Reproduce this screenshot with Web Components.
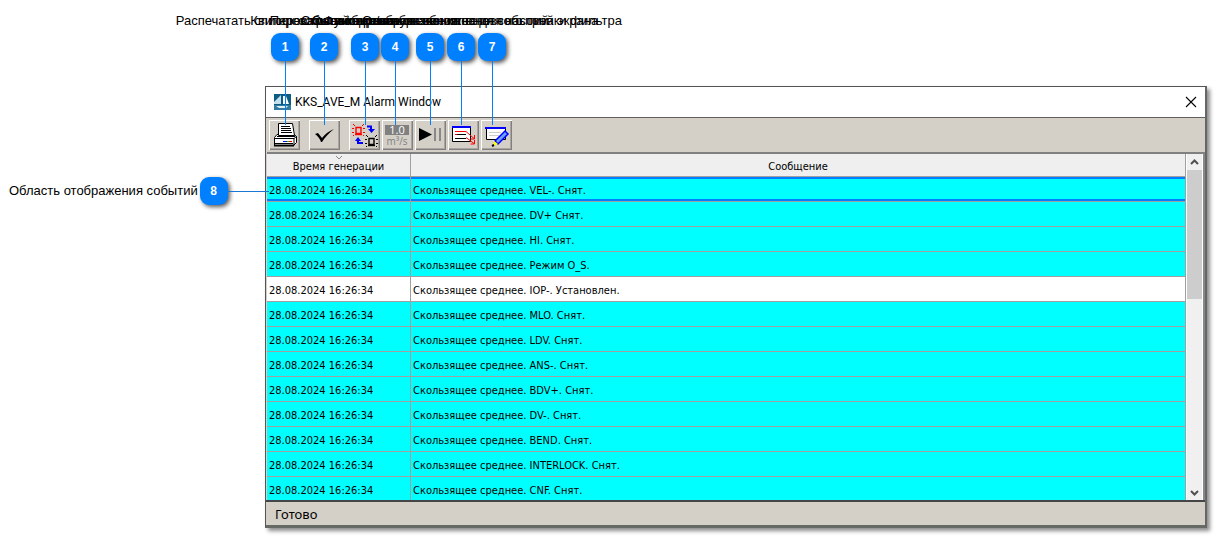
<!DOCTYPE html>
<html lang="ru">
<head>
<meta charset="utf-8">
<title>KKS_AVE_M Alarm Window</title>
<style>
body { margin: 0; background: #fff; color: #000; font: 13px/16px "Liberation Sans", Arial, sans-serif; }
</style>
</head>
<body>
<help-page>
  <call-out slot="marks" n="1" style="--at:285px">Распечатать список событий экрана</call-out>
  <call-out slot="marks" n="2" style="--at:324px">Квитировать сообщения</call-out>
  <call-out slot="marks" n="3" style="--at:365px">Переключение режимов звонка</call-out>
  <call-out slot="marks" n="4" style="--at:395px">Скрыть/показать значения тега</call-out>
  <call-out slot="marks" n="5" style="--at:430px">Остановка/запуск обновления событий</call-out>
  <call-out slot="marks" n="6" style="--at:461px">Функция отображения основного окна экрана</call-out>
  <call-out slot="marks" n="7" style="--at:492px">Отображение окна для настройки фильтра</call-out>
  <side-note slot="side" n="8">Область отображения событий</side-note>
  <alarm-window>
    <span slot="title">KKS_AVE_M Alarm Window</span>
    <tool-bar slot="tools"></tool-bar>
    <event-table></event-table>
    <scroll-bar slot="scroll"></scroll-bar>
    <span slot="status">Готово</span>
  </alarm-window>
</help-page>
<script>
const define = (name, html, setup) => customElements.define(name, class extends HTMLElement {
  connectedCallback() {
    if (this.shadowRoot) return;
    const root = this.attachShadow({ mode: "open" });
    root.innerHTML = html;
    if (setup) setup(root, this);
  }
});

define("help-page", `<style>
  :host { display: grid; position: relative; grid-template: 86px calc(100vh - 95px) / 265px minmax(0, 1fr); padding: 0 9px 9px 0; overflow: hidden; }
  .marks { grid-column: 1 / 3; }
</style><div class="marks"><slot name="marks"></slot></div><slot name="side"></slot><slot></slot>`);

define("number-badge", `<style>
  :host { display: grid; place-items: center; box-sizing: border-box; width: 28px; height: 28px; flex: none; border-radius: 9px; background: #0080ff; color: #fff; font-weight: bold; font-size: 12px; line-height: 16px; box-shadow: 2px 2px 4px rgba(0,0,0,.65); }
</style><slot></slot>`);

define("call-out", `<style>
  :host { position: absolute; z-index: 2; top: 13px; left: var(--at); width: 0; display: flex; flex-direction: column; align-items: center; gap: 4px; white-space: nowrap; pointer-events: none; }
  .stem { width: 1px; height: 64px; margin-top: -4px; background: #0080ff; }
</style><div><slot></slot></div><number-badge></number-badge><div class="stem"></div>`,
(root, host) => root.querySelector("number-badge").textContent = host.getAttribute("n"));

define("side-note", `<style>
  :host { display: flex; align-items: center; align-self: start; gap: 2px; margin: 91px -4px 0 9px; position: relative; z-index: 2; white-space: nowrap; }
  .stem { flex: 1; height: 1px; margin-left: -2px; background: #1976d2; }
</style><span><slot></slot></span><number-badge></number-badge><div class="stem"></div>`,
(root, host) => root.querySelector("number-badge").textContent = host.getAttribute("n"));

define("alarm-window", `<style>
  :host { display: flex; flex-direction: column; box-sizing: border-box; min-width: 0; border: 1px solid #555; border-right: 2px solid #666; border-bottom: 3px solid #656a65; background: #d4d0c8; box-shadow: 3px 3px 4px rgba(0,0,0,.45); }
  header { display: flex; align-items: center; gap: 4px; height: 30px; padding: 0 6px 0 8px; background: #fff; border-bottom: 1px solid #606060; font: 12px/16px Roboto, "Open Sans", sans-serif; }
  header .t { flex: 1; }
  header button { width: 16px; height: 16px; padding: 0; border: 0; background: none; }
  svg { display: block; }
  .main { flex: 1; min-height: 0; display: flex; margin-left: 1px; overflow: hidden; border-top: 2px solid #808080; background: #efefef; border-right: 2px solid #888; }
  .main .view { flex: 1; min-width: 0; overflow: hidden; }
  footer { flex: none; height: 23px; border-top: 2px solid #454545; padding-left: 9px; font: 13px/24px "Noto Sans", sans-serif; }
</style>
<header>
  <svg width="17" height="16" viewBox="0 0 17 16"><rect width="17" height="16" fill="#0b5c82"/><path d="M7 1v9H0v-2z" fill="#c6dfec"/><path d="M9 2h3l3 8H9z" fill="#fff"/><path d="M0 11h17v5H0z" fill="#347c9f"/><path d="M2 12h12l-2 2H5z" fill="#e2eff5"/></svg>
  <span class="t"><slot name="title"></slot></span>
  <button aria-label="Закрыть"><svg width="16" height="16"><path d="M3 3l10 10M13 3L3 13" stroke="#000" stroke-width="1.1"/></svg></button>
</header>
<slot name="tools"></slot>
<div class="main"><div class="view"><slot></slot></div><slot name="scroll"></slot></div>
<footer><slot name="status"></slot></footer>`);

define("tool-button", `<style>
  :host { display: block; }
  button { display: block; width: 31px; height: 30px; padding: 0; border: 0; background: #d4d0c8; box-shadow: inset 1px 1px #fff, inset -1px -1px #808080, inset -2px -2px #aaa69f; }
</style><button><slot></slot></button>`,
(root, host) => root.querySelector("button").setAttribute("aria-label", host.getAttribute("label")));

const icon = body => `<svg width="31" height="30" viewBox="0 0 31 30" fill="none">${body}</svg>`;
const lamp = `<path d="M4 3.500h5v6H4z" stroke-width="1.400"/><path d="M3 10.500h7" stroke-width="1.400"/><path d="M1 0l2 2M12 0l-2 2M0 4.500h2M11 4.500h2M0 8.500h2M11 8.500h2M2 11l-1 1M11 11l1 1" stroke-width="1"/>`;
define("tool-bar", `<style>
  :host { display: flex; flex: none; align-items: center; gap: 2px; height: 34px; padding-left: 3px; }
  .solo { margin-right: 7px; }
  svg { display: block; }
</style>
<tool-button class="solo" label="Печать">${icon(`<path d="M8 14.500L5.500 17.500V25.500H24.500L27.500 22.500V16.500L25 14.500z" fill="#fff" stroke="#000"/><path d="M9.500 3.500h14l2 12h-16z" fill="#fff" stroke="#000"/><path d="M12 6.500h9M12 8.500h10M12 10.500h10M12 12.500h11" stroke="#000"/><path d="M8 16.500h18M5 18.500h20M25 18.500v7M25 18.500l2.500-2M6 23.500h18" stroke="#000"/><path d="M5 25.500h20" stroke="#000" stroke-width="2"/><path d="M14 21.500h4" stroke="#00f"/><path d="M18 21.500h2" stroke="#0c0"/><path d="M20 21.500h3" stroke="#e00"/>`)}</tool-button>
<tool-button class="solo" label="Квитировать">${icon(`<path d="M6 14l3-1 4 5c3-4 7-7 12-9-5 4-9 8-12 13h-1c-1-3-3-6-6-8z" fill="#000"/>`)}</tool-button>
<tool-button label="Режим">${icon(`<g transform="translate(3 4)" stroke="#f00">${lamp}</g><g transform="translate(16 15)" stroke="#000">${lamp}</g><path d="M18 6.500h4v3" stroke="#00f" stroke-width="2"/><path d="M19 9h7l-3.500 4z" fill="#00f"/><path d="M14 23H9v-3" stroke="#00f" stroke-width="2"/><path d="M6 21l3-4 3 4z" fill="#00f"/>`)}</tool-button>
<tool-button label="Значения">${icon(`<path d="M3 5h24v10H3z" fill="#808080"/><text x="15" y="14" text-anchor="middle" font-family="Open Sans" font-size="11" fill="#fff">1.0</text><text x="15" y="25" text-anchor="middle" font-family="Open Sans" font-size="10" fill="#808080">m³/s</text>`)}</tool-button>
<tool-button label="Пуск и пауза">${icon(`<path d="M4 8l13 6.500L4 21z" fill="#000"/><path d="M20 8v13M25 8v13" stroke="#888" stroke-width="2"/>`)}</tool-button>
<tool-button label="Окно на экран">${icon(`<path d="M4.500 7.500h18v14h-18z" fill="#fff" stroke="#000"/><path d="M4 7h19" stroke="#00f" stroke-width="2"/><path d="M7 11.500h11M7 14.500h11M7 18.500h11" stroke="#000"/><path d="M7 11.500h11l8 7M7 14.500h2M18 17.500l8 6M26.500 15v4h-4M26.500 20v4h-4" stroke="#f00"/>`)}</tool-button>
<tool-button label="Фильтр">${icon(`<path d="M5.500 8.500h19v11h-19z" fill="#fff" stroke="#000"/><path d="M4 8h21" stroke="#00f" stroke-width="2"/><path d="M8 12.500h12M8 15.500h10" stroke="#ccc"/><path d="M24 11l3 3-10 10-3-3z" fill="#6aa0ff" stroke="#00f" stroke-width="1.500"/><path d="M13 21l4 3-5 2z" fill="#ff0"/><path d="M11 26l2-1" stroke="#000" stroke-width="2"/>`)}</tool-button>`);

const messages = ["VEL-. Снят.", "DV+ Снят.", "HI. Снят.", "Режим O_S.", "IOP-. Установлен.", "MLO. Снят.", "LDV. Снят.", "ANS-. Снят.", "BDV+. Снят.", "DV-. Снят.", "BEND. Снят.", "INTERLOCK. Снят.", "CNF. Снят."];
define("event-table", `<style>
  :host { display: block; font: 11px/16px "DejaVu Sans Condensed", "Noto Sans", sans-serif; }
  table { width: 100%; table-layout: fixed; border-collapse: separate; border-spacing: 0; }
  th, td { box-sizing: border-box; padding: 3px 2px 0; border: solid #a0a0a0; border-width: 0 1px 1px 0; text-align: left; white-space: nowrap; }
  th { height: 23px; text-align: center; font-weight: normal; background: #efefef; position: relative; }
  th:first-child { width: 144px; }
  th svg { position: absolute; top: 1px; left: 50%; margin-left: -4px; }
  td { height: 25px; background: #0ff; }
  .set td { background: #fff; }
  .sel td { box-shadow: inset 0 2px #0080ff, inset 0 -2px #0080ff; }
</style><table><thead><tr><th scope="col"><svg width="8" height="5"><path d="M1 1l3 3 3-3" fill="none" stroke="#888"/></svg>Время генерации</th><th scope="col">Сообщение</th></tr></thead><tbody></tbody></table>`,
root => {
  root.querySelector("tbody").innerHTML = messages.map((m, i) =>
    `<tr class="${i === 0 ? "sel" : m.includes("Установлен") ? "set" : ""}"><td>28.08.2024 16:26:34</td><td>Скользящее среднее. ${m}</td></tr>`).join("");
});

define("scroll-bar", `<style>
  :host { display: flex; flex: none; flex-direction: column; width: 15px; background: #f0f0f0; border: solid #fff; border-width: 0 1px; }
  button { flex: none; height: 16px; padding: 0; border: 0; background: #f0f0f0; }
  .track { flex: 1; }
  .thumb { height: 41%; background: #cdcdcd; }
  svg { display: block; margin: auto; }
  path { fill: none; stroke: #505050; stroke-width: 2; }
</style><button aria-label="Вверх"><svg width="9" height="7"><path d="M1 5l3.500-3.500L8 5"/></svg></button><div class="track"><div class="thumb"></div></div><button aria-label="Вниз"><svg width="9" height="7"><path d="M1 2l3.500 3.500L8 2"/></svg></button>`);
</script>
</body>
</html>
